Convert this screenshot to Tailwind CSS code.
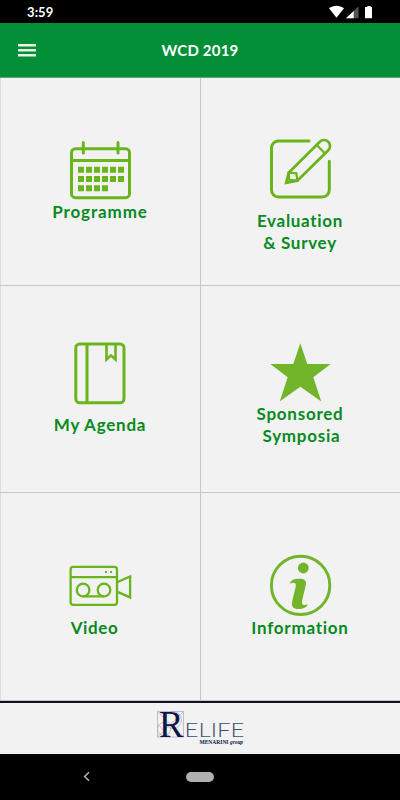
<!DOCTYPE html>
<html lang="en">
<head>
    <meta charset="UTF-8">
    <meta name="viewport" content="width=device-width, initial-scale=1.0">
    <title>WCD 2019</title>
    <script src="https://cdn.jsdelivr.net/npm/@tailwindcss/browser@4"></script>
</head>
<body class="bg-black">
    <div class="flex flex-col w-[400px] h-[800px] overflow-hidden font-['Lato',sans-serif]">
        <!-- status bar -->
        <div class="flex justify-between items-center h-[23px] pl-[27px] pr-[26px] bg-black text-white">
            <span class="text-[13px] font-bold tracking-[0.1px] leading-none pt-[2px]">3:59</span>
            <svg class="w-[45px] h-[14px]" viewBox="0 0 45 14" fill="#fff">
                <path d="M0 3.2C4.3 -.2 10.7 -.2 15 3.2L7.5 12.7Z"/>
                <path d="M29.5 1.5V13.3H17Z" fill="#555"/>
                <path d="M24.7 6V13.3H17Z"/>
                <path d="M38.3 1H41.7V2H43V13.3H36V2H38.3Z"/>
            </svg>
        </div>

        <header class="relative flex items-center justify-center h-[55px] bg-[#028f37] border-b border-[#55a975] text-white">
            <svg class="absolute left-[18px] top-[20px] w-[18px] h-[14px]" viewBox="0 0 18 14" fill="#e9f5e4">
                <path d="M0 1h18v2.4H0zM0 6h18v2.4H0zM0 11h18v2.4H0z"/>
            </svg>
            <h1 class="text-[15px] font-bold tracking-[0.2px]">WCD 2019</h1>
        </header>

        <main class="grid grid-cols-[201px_199px] grid-rows-[208px_207px_208px] bg-[#f2f2f2] text-[#078a1e] text-[17px] leading-[22px] font-bold text-center">
            <a href="#" class="flex flex-col items-center pt-[60px] border-r border-b border-[#c6c6c6] shadow-[inset_1px_0_#dcdcdc]">
                <svg class="w-16 h-16 shrink-0" viewBox="0 0 64 64" fill="none" stroke="#6ab51c" stroke-width="3">
                    <rect x="3.5" y="10.7" width="58" height="49" rx="4"/>
                    <path d="M3.5 22.5H61.5"/>
                    <path d="M15.3 4.6V15M50 4.6V15" stroke-linecap="round"/>
                    <g stroke="none" fill="#6ab51c">
                        <path d="M10 28.7h6v6h-6zM18 28.7h6v6h-6zM26 28.7h6v6h-6zM34 28.7h6v6h-6zM42 28.7h6v6h-6zM50 28.7h6v6h-6z"/>
                        <path d="M10 38h6v6h-6zM18 38h6v6h-6zM26 38h6v6h-6zM34 38h6v6h-6zM42 38h6v6h-6zM50 38h6v6h-6z"/>
                        <path d="M10 47.3h6v6h-6zM18 47.3h6v6h-6zM26 47.3h6v6h-6zM34 47.3h6v6h-6z"/>
                    </g>
                </svg>
                <span class="-mt-px tracking-[0.9px]">Programme</span>
            </a>
            <a href="#" class="flex flex-col items-center pt-[60px] pr-px border-b border-[#c6c6c6]">
                <svg class="w-16 h-16 shrink-0" viewBox="0 0 64 64" fill="none" stroke="#6ab51c" stroke-width="3">
                    <path d="M41 3H10.5a7 7 0 0 0-7 7V52a7 7 0 0 0 7 7H54.3a7 7 0 0 0 7-7V23.2" stroke-linecap="round"/>
                    <path d="M20.7 34.7L51.8 3.8A5.8 5.8 0 0 1 60.3 12.2L29.3 42.7L18.2 44.7Z" stroke-width="2.7"/>
                    <path d="M20.7 34.7L28.4 35.2L29.3 42.7L21.3 41.8ZM49 7.3L56.8 15.2" stroke-width="2.2"/>
                </svg>
                <span class="mt-2 tracking-[0.7px]">Evaluation<br>&amp; Survey</span>
            </a>
            <a href="#" class="flex flex-col items-center pt-[55px] border-r border-b border-[#c6c6c6] shadow-[inset_1px_0_#dcdcdc]">
                <svg class="w-16 h-16 shrink-0" viewBox="0 0 64 64" fill="none" stroke="#6ab51c" stroke-width="3">
                    <rect x="7.8" y="3" width="48.2" height="58.8" rx="4"/>
                    <path d="M19 3V61.6"/>
                    <path d="M38.5 3V18.5L43 14.4L47.5 18.5V3" stroke-width="2.6"/>
                </svg>
                <span class="mt-[9px] tracking-[0.75px]">My Agenda</span>
            </a>
            <a href="#" class="flex flex-col items-center pt-[55px] pr-px border-b border-[#c6c6c6]">
                <svg class="w-16 h-16 shrink-0" viewBox="0 0 64 64" fill="#72b52b">
                    <path d="M32.3 2.3L39.3 23H62.7L45.3 36.3L53.3 60.5L32.3 45.7L11.7 60.5L19.7 36.3L2.3 23H25.3Z"/>
                </svg>
                <span class="-mt-[2px] tracking-[0.75px]">Sponsored<br><span class="pl-[3px]">Symposia</span></span>
            </a>
            <a href="#" class="flex flex-col items-center pt-[61px] border-r border-b border-[#c6c6c6] shadow-[inset_1px_0_#dcdcdc]">
                <svg class="w-16 h-16 shrink-0" viewBox="0 0 64 64" fill="none" stroke="#6ab51c" stroke-width="2.3">
                    <rect x="2.6" y="12.8" width="46.4" height="38" rx="2.5"/>
                    <path d="M2.6 23.1H49"/>
                    <circle cx="15.1" cy="36" r="6.3"/>
                    <circle cx="36" cy="36" r="6.3"/>
                    <path d="M15.1 42.3H36M49 28.2L62.1 22.5V43.4L49 37.6"/>
                    <path d="M37 17h2v2h-2zM42 17h2v2h-2z" fill="#6ab51c" stroke="none"/>
                </svg>
                <span class="-mt-px pr-[11px] tracking-[0.6px]">Video</span>
            </a>
            <a href="#" class="flex flex-col items-center pt-[61px] pr-px border-b border-[#c6c6c6]">
                <svg class="w-16 h-16 shrink-0" viewBox="0 0 64 64" fill="#72b52b">
                    <circle cx="32.6" cy="31.4" r="29.2" fill="none" stroke="#72b52b" stroke-width="3"/>
                    <circle cx="35.3" cy="14" r="5.4"/>
                    <path d="M21.7 29.8C23 26 26.5 24.8 31 24.8C36 24.6 38.8 26.5 37.9 30.5L34.4 45.5C33.6 49 34 51.2 36.8 51.1C38 51 39 50.8 40 50.3C38.6 53.6 35.4 55 31 55C25.2 55.2 23.1 52.4 24.2 47.5L27.6 33C28.4 29.4 27.3 28.6 24.5 28.9C23.4 29 22.5 29.3 21.7 29.8Z"/>
                </svg>
                <span class="-mt-px tracking-[0.75px]">Information</span>
            </a>
        </main>

        <footer class="flex justify-center h-[53px] border-t-2 border-[#12101c] bg-[#f2f2f2]">
            <svg class="mt-[6px] w-[92px] h-[38px] overflow-visible" viewBox="0 0 92 38" font-family="Liberation Serif, serif">
                <g fill="none" stroke="#a6abb8" stroke-width=".7">
                    <path d="M3.5 2.5H29.5V28H3.5ZM3.5 28L29.5 2.5M3.5 15L16 28M3.5 2.5L29.5 28M10 2.5V28"/>
                    <circle cx="10" cy="20" r="6.5"/>
                    <circle cx="19" cy="11" r="8.5"/>
                </g>
                <text x="5" y="28" font-size="38" textLength="24.5" lengthAdjust="spacingAndGlyphs" fill="#0c1645">R</text>
                <text x="30.5" y="28" font-family="Lato, sans-serif" font-weight="300" font-size="20" textLength="60" lengthAdjust="spacingAndGlyphs" fill="#3c4c6c">ELIFE</text>
                <text x="45.5" y="35.2" font-size="6.5" font-weight="700" textLength="29" lengthAdjust="spacingAndGlyphs" fill="#0c1645">MENARINI</text>
                <text x="76" y="35.2" font-size="6.5" font-weight="700" font-style="italic" textLength="13" lengthAdjust="spacingAndGlyphs" fill="#0c1645">group</text>
            </svg>
        </footer>

        <!-- system navigation -->
        <nav class="relative flex items-center justify-center h-[46px] bg-black">
            <svg class="absolute left-[83px] top-[17px] w-[7px] h-[11px]" viewBox="0 0 7 11" fill="none" stroke="#b5b5b5" stroke-width="1.5">
                <path d="M6 1.2L1.6 5.5L6 9.8"/>
            </svg>
            <div class="w-7 h-[10px] rounded-full bg-[#b0b0b0]"></div>
        </nav>
    </div>
</body>
</html>
